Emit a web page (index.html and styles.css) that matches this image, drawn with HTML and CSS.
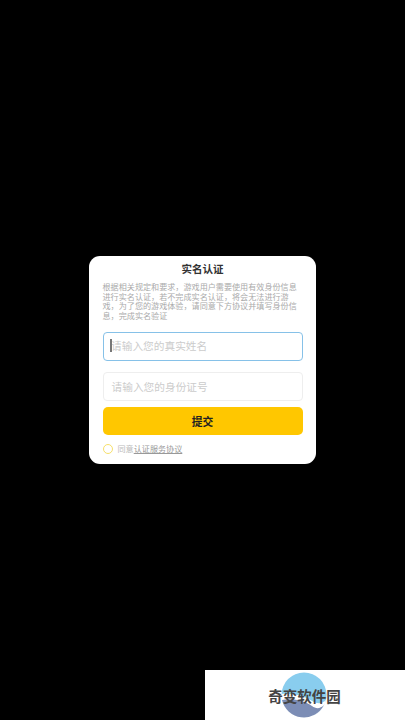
FILE: index.html
```html
<!DOCTYPE html>
<html lang="zh-CN">
<head>
    <meta charset="UTF-8">
    <meta name="viewport" content="width=device-width, initial-scale=1.0">
    <title>实名认证</title>
    <link rel="stylesheet" href="styles.css">
</head>
<body>
    <!-- 实名认证弹窗 -->
    <div class="auth-card">
        <h2 class="auth-title">实名认证</h2>
        <p class="auth-desc">根据相关规定和要求，游戏用户需要使用有效身份信息进行实名认证，若不完成实名认证，将会无法进行游戏，为了您的游戏体验，请同意下方协议并填写身份信息，完成实名验证</p>
        <div class="auth-field focused"><span class="caret"></span>请输入您的真实姓名</div>
        <div class="auth-field">请输入您的身份证号</div>
        <button class="submit-button">提交</button>
        <div class="agree-row">
            <span class="agree-radio"></span>
            <span class="agree-text">同意<a class="agree-link">认证服务协议</a></span>
        </div>
    </div>

    <!-- 水印 -->
    <div class="watermark">
        <svg class="watermark-logo" width="46" height="46" viewBox="0 0 46 46">
            <circle cx="23" cy="23" r="22.5" fill="#89cdee"/>
            <path d="M0.5 22 C14 21 25 25 32 29.5 C36 32 41 32 45 28 A22.5 22.5 0 0 1 0.5 22 Z" fill="#fff"/>
            <path d="M1 28 C12 26 24 29 31 34 C35 37 39 37 43 33 A22.5 22.5 0 0 1 1 28 Z" fill="#7c8db5"/>
        </svg>
        <span class="watermark-text">奇变软件园</span>
    </div>
</body>
</html>
```
FILE: styles.css
```css
/* 全局样式 */
html, body {
    margin: 0;
    padding: 0;
    width: 100%;
    height: 100%;
    overflow: hidden;
    background-color: #000;
    font-family: "Noto Sans CJK SC", "Liberation Sans", sans-serif;
}

body {
    display: flex;
    justify-content: center;
    align-items: center;
}

/* 弹窗 */
.auth-card {
    width: 227px;
    height: 208px;
    box-sizing: border-box;
    padding: 5px 13.5px 0;
    background-color: #fff;
    border-radius: 11px;
    display: flex;
    flex-direction: column;
}

.auth-title {
    margin: 0;
    font-size: 10.5px;
    line-height: 16px;
    font-weight: bold;
    text-align: center;
    color: #333;
}

.auth-desc {
    margin: 5px 0 0;
    font-size: 8.1px;
    line-height: 9.6px;
    color: #aaa;
}

/* 输入框 */
.auth-field {
    position: relative;
    height: 29px;
    box-sizing: border-box;
    margin-top: 12px;
    padding-left: 8px;
    border: 1px solid #eee;
    border-radius: 4px;
    font-size: 10.7px;
    line-height: 27px;
    color: #ccc;
}

.auth-field.focused {
    border: 1.5px solid #86c1e8;
    padding-left: 7.5px;
    line-height: 26px;
}

.auth-field + .auth-field {
    margin-top: 11px;
}

.caret {
    position: absolute;
    left: 6.5px;
    top: 6px;
    width: 1.5px;
    height: 13px;
    background-color: #777;
}

/* 提交按钮 */
.submit-button {
    height: 28px;
    margin-top: 6px;
    padding: 0;
    border: none;
    border-radius: 5px;
    background-color: #ffc700;
    color: #222;
    font-family: inherit;
    font-size: 10.8px;
    font-weight: bold;
}

/* 协议 */
.agree-row {
    display: flex;
    align-items: center;
    gap: 5px;
    margin-top: 8px;
}

.agree-radio {
    width: 10px;
    height: 10px;
    box-sizing: border-box;
    border: 1.4px solid #f7e06a;
    border-radius: 50%;
}

.agree-text {
    font-size: 8.1px;
    line-height: 12px;
    color: #bbb;
}

.agree-link {
    color: #999;
    text-decoration: underline;
}

/* 水印 */
.watermark {
    position: absolute;
    right: 0;
    bottom: 0;
    width: 200px;
    height: 50px;
    background-color: #fff;
    display: flex;
    justify-content: center;
    align-items: center;
}

.watermark-logo {
    position: absolute;
    left: 76px;
    top: 2px;
}

.watermark-text {
    position: relative;
    margin-left: -1px;
    font-size: 14.5px;
    font-weight: bold;
    color: #444;
}
```
